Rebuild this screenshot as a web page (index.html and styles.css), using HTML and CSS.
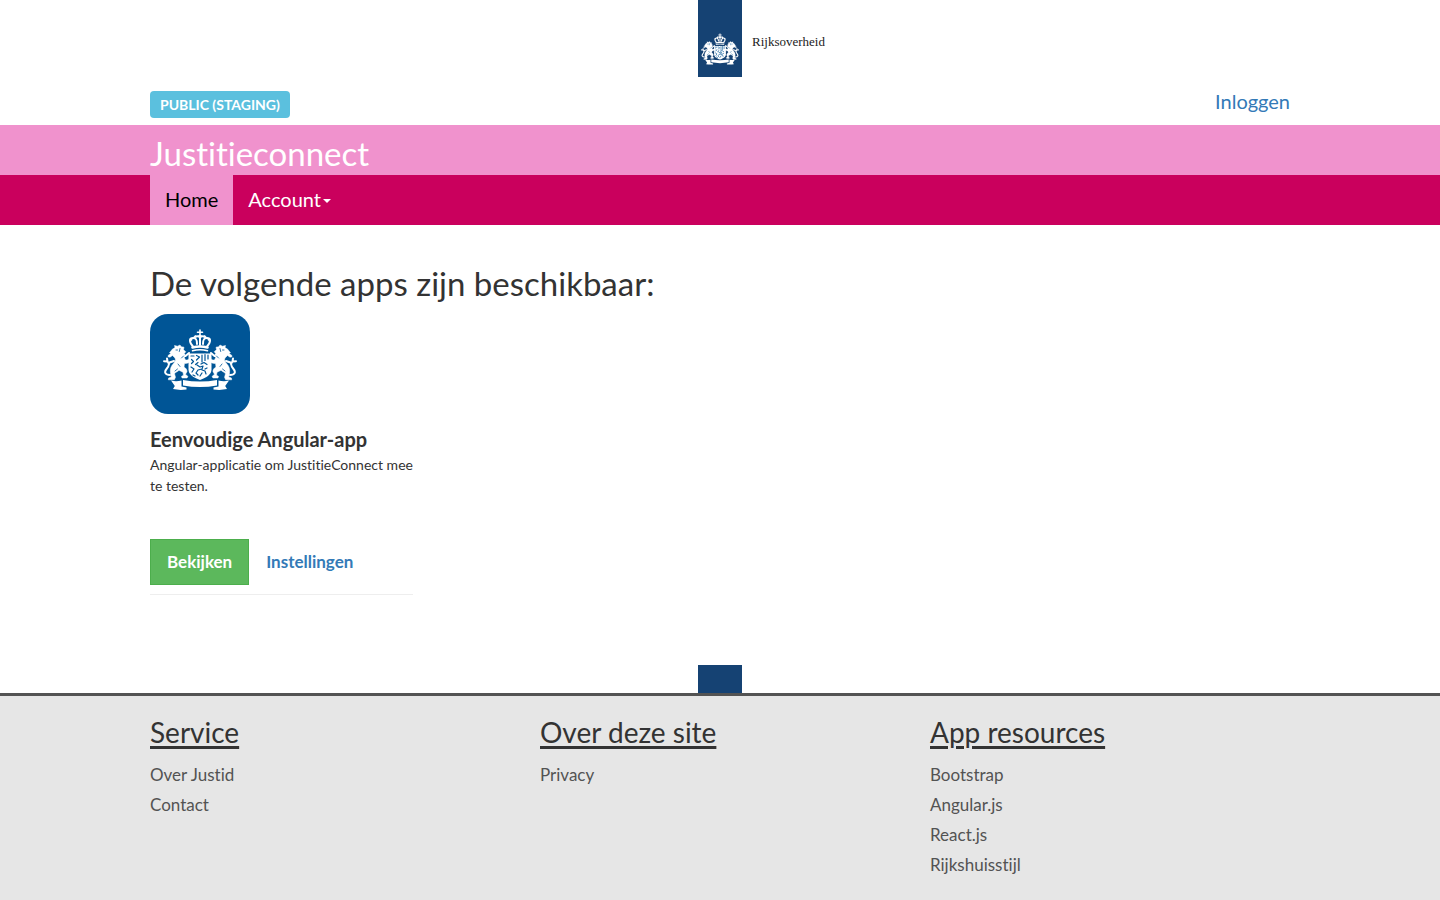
FILE: index.html
```html
<!DOCTYPE html>
<html lang="nl">
<head>
<meta charset="utf-8">
<meta name="viewport" content="width=device-width, initial-scale=1">
<title>Justitieconnect</title>
<link rel="stylesheet" href="styles.css">
</head>
<body>
<svg class="defs" aria-hidden="true">
  <symbol id="crest" viewBox="13 15 74 61">
    <g fill="none" stroke="#fff" stroke-linecap="round" stroke-linejoin="round">
      <path stroke-width="1.6" d="M50 16v6M47.500 18.200h5"/>
      <path stroke-width="2" d="M43 32.500c-4.500-5-3.500-8.500 0-8.500s4 2 4 6M57 32.500c4.500-5 3.500-8.500 0-8.500s-4 2-4 6M50 23v8M43.500 24c2-2 4-2 6.500-1.500 2.500-.5 4.500-.5 6.500 1.500"/>
      <path stroke-width="2.600" d="M42.500 33.500q7.500-2 15 0"/>
      <path stroke-width="1.500" d="M42.500 36.800q7.500-2 15 0"/>
    </g>
    <g fill="#fff"><circle cx="41" cy="25.500" r="1.400"/><circle cx="59" cy="25.500" r="1.400"/><circle cx="50" cy="22.500" r="1.800"/><circle cx="45.500" cy="22.500" r="1.200"/><circle cx="54.500" cy="22.500" r="1.200"/></g>
    <path fill="#fff" d="M38.500 39.500h23v16c0 5-5 8-11.500 10.500C43.500 63.500 38.500 60.500 38.500 55.500z"/>
    <g fill="none" stroke="#005596" stroke-width="1.200" stroke-linecap="round" stroke-linejoin="round">
      <path d="M41 42h3m2.500-.5l3 1.500-3 3m-5-.5l2 2-2 2m4 1l2.500-2m4-7.500v7m3-7.500v6m3-5.500v4M51 50l3-1.500 3 2M41 53l3 2-2 3m5-7l3 2 3-1-1 3-4 1-2 3 2 2m4-5l3 1 1 3m-4-1l-2 3m7-8l-2 1m-12 6l2 1"/>
    </g>
    <g id="lion">
      <path fill="#fff" stroke="#fff" stroke-width=".5" d="M22 35.500l3-2-.5-2 3 .7 2.500-1.200 1.200 1.700 2.800.5-.5 2.500 2.300 2-1.500 1.800 1.700 2.500-1.700 1.500 1.200 2.500c1.800.2 3-.6 4-1.600l1 2.300c-1.500 2.400-4 3-6 2.700l-.5 3.600c2 1 3.200 2.800 3 4.800l-1.500 2.400 2.500 2.300-1 1.500h-5l-.5-1.700 2-1-.5-3-4-2c-1.500 1.300-3.500 2-4.500 3.400l1 3.600-1.200 2.500h-6l.3-1.800 2.700-1-.8-4c-.7-4 .6-7 3-9.500 2-2 2.300-3.600 1.500-5.500l-2.500-2.500-2.500 1.700-2-.4.300-1.600 2.700-1.700-1.500-.8 1.500-1.700z"/>
      <path fill="none" stroke="#fff" stroke-width="2" stroke-linecap="round" stroke-linejoin="round" d="M20 61c-5 0-6-3-3.500-6s3.500-5 1-7.500l-3.500-.3M17.500 47.500l-.5-3M24 47l-4.500 1.500-1 3M39 39l-3.500 3"/>
      <path fill="none" stroke="#005596" stroke-width=".8" stroke-linecap="round" d="M26 36h1.500M30 34.500l-.7 3M33.500 42l-2 2M28 50l2 2.500M25 57l2.500-2"/>
    </g>
    <use href="#lion" transform="matrix(-1 0 0 1 100 0)"/>
    <g fill="#fff">
      <path d="M33 66q17 3.200 34 0v5.500q-17 3.200-34 0z"/>
      <path d="M21 66.500q5 1.300 10.500 0v6l5 1v2q-7 1-13.500-.4l1.800-3.100zM79 66.500q-5 1.300-10.500 0v6l-5 1v2q7 1 13.500-.4l-1.800-3.100z"/>
    </g>
  </symbol>
</svg>

<header>
  <div class="brand">
    <a class="ribbon" href="#" aria-label="Rijksoverheid"><svg class="ribbon-crest" aria-hidden="true"><use href="#crest"/></svg><span class="brand-name">Rijksoverheid</span></a>
  </div>
  <div class="container utility">
    <span class="label">PUBLIC (STAGING)</span>
    <a class="login" href="#">Inloggen</a>
  </div>
  <div class="title-bar"><div class="container"><a class="site-title" href="#">Justitieconnect</a></div></div>
  <nav class="nav-bar">
    <div class="container nav-items">
      <a class="nav-link active" href="#">Home</a>
      <button class="nav-link" type="button">Account<span class="caret"></span></button>
    </div>
  </nav>
</header>

<main class="container content">
  <h1>De volgende apps zijn beschikbaar:</h1>
  <div class="apps">
    <article class="app">
      <div class="app-icon"><svg class="app-crest" aria-hidden="true"><use href="#crest"/></svg></div>
      <h2>Eenvoudige Angular-app</h2>
      <p>Angular-applicatie om JustitieConnect mee te testen.</p>
      <div class="actions">
        <button class="btn primary" type="button">Bekijken</button>
        <a class="btn link" href="#">Instellingen</a>
      </div>
    </article>
  </div>
</main>

<div class="footer-mark"></div>
<footer>
  <div class="container footer-columns">
    <section><h3>Service</h3><ul><li><a href="#">Over Justid</a></li><li><a href="#">Contact</a></li></ul></section>
    <section><h3>Over deze site</h3><ul><li><a href="#">Privacy</a></li></ul></section>
    <section><h3>App resources</h3><ul><li><a href="#">Bootstrap</a></li><li><a href="#">Angular.js</a></li><li><a href="#">React.js</a></li><li><a href="#">Rijkshuisstijl</a></li></ul></section>
  </div>
</footer>
</body>
</html>
```
FILE: styles.css
```css
* { box-sizing: border-box; }
body {
  margin: 0;
  min-height: 100vh;
  display: flex;
  flex-direction: column;
  font-family: Lato, "Open Sans", sans-serif;
  font-size: 14px;
  font-variant-ligatures: none;
  line-height: 21px;
  color: #333;
  background: #fff;
}
a { color: #337ab7; text-decoration: none; }
button { font: inherit; font-variant-ligatures: none; cursor: pointer; }
.defs { position: absolute; width: 0; height: 0; }
.container { width: 100%; max-width: 1170px; margin: 0 auto; padding: 0 15px; }

.brand { display: flex; justify-content: center; }
.ribbon {
  position: relative;
  width: 44px;
  height: 77px;
  padding: 33px 3px 0;
  background: #154273;
}
.ribbon-crest { display: block; width: 38px; height: 32px; }
.brand-name {
  position: absolute;
  left: 54px;
  top: 32px;
  font: 13px/20px "Liberation Serif", serif;
  color: #222;
}

.utility { display: flex; justify-content: space-between; align-items: center; height: 48px; padding-top: 6px; }
.label {
  padding: 0 10px;
  border-radius: 4px;
  background: #5bc0de;
  color: #fff;
  font-weight: 700;
  line-height: 27px;
}
.login { font-size: 20px; line-height: 30px; margin-bottom: 6px; }

.title-bar { background: #f092cd; }
.site-title { display: block; color: #fff; font-size: 33px; line-height: 48px; padding-top: 4px; height: 50px; }
.nav-bar { background: #ca005d; }
.nav-items { display: flex; }
.nav-link {
  display: flex;
  align-items: center;
  padding: 0 15px 2px;
  border: 0;
  background: none;
  color: #fff;
  font-size: 20px;
  line-height: 48px;
}
.nav-link.active { background: #f092cd; color: #000; }
.caret { margin: 4px 0 0 2px; border: 4px solid transparent; border-top-color: currentColor; border-bottom: 0; }

.content { padding-top: 38px; }
h1 { margin: 0 0 11px; font-size: 33px; line-height: 40px; font-weight: 400; }
.apps { display: grid; grid-template-columns: repeat(auto-fill, minmax(260px, 1fr)); gap: 30px; }
.app { border-bottom: 1px solid #eee; padding-bottom: 9px; }
.app-icon { width: 100px; height: 100px; padding: 15px 13px; border-radius: 18px; background: #005596; }
.app-crest { display: block; width: 74px; height: 61px; }
h2 { margin: 10px 0 0; font-size: 20px; line-height: 30px; font-weight: 700; }
.app p { margin: 0 -10px 43px 0; }
.actions { display: flex; }
.btn { padding: 0 16px; border: 1px solid transparent; font-size: 17px; line-height: 44px; font-weight: 700; }
.btn.primary { background: #5cb85c; border-color: #4cae4c; color: #fff; }

.footer-mark { width: 44px; height: 28px; margin: 70px auto 0; background: #154273; }
footer { flex: 1; border-top: 3px solid #535353; background: #e6e6e6; }
.footer-columns { display: grid; grid-template-columns: repeat(3, 1fr); gap: 30px; padding-top: 16px; }
h3 { margin: 0 0 8px; font-size: 28px; line-height: 40px; font-weight: 400; text-decoration: underline; text-decoration-thickness: 3px; text-underline-offset: 3px; }
ul { margin: 0; padding: 0; list-style: none; }
li { font-size: 17px; line-height: 30px; }
li a { color: #535353; }
```
